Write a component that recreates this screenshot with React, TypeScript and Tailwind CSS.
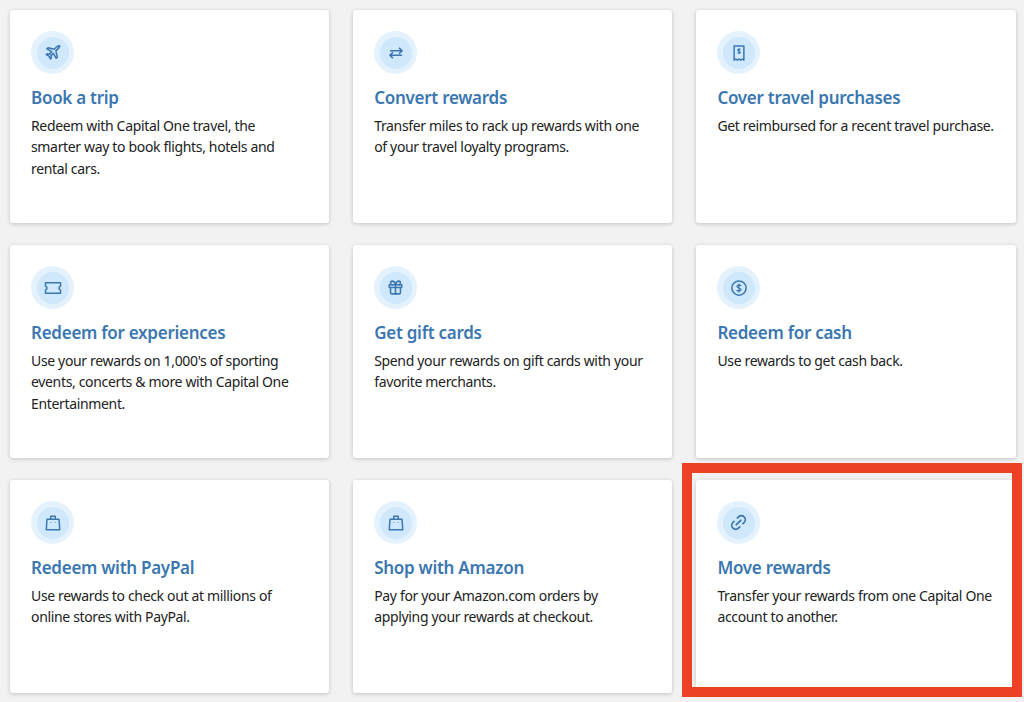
import { Gift, Link2 } from "lucide-react";
import type { ReactNode } from "react";

const iconClass = "h-[18px] w-[18px]";

const PlaneIcon = () => (
    <svg viewBox="0 0 24 24" className={iconClass} fill="none" stroke="currentColor" strokeWidth="2" strokeLinejoin="round">
        <path d="M21 3.2c-1.2-.9-3.2-.4-4.4.8l-3 3-8.3-2-1.5 1.5 6.5 3.8-3 3.2-3-.6-1.3 1.3 3.6 2 2 3.6 1.3-1.3-.6-3 3.2-3 3.8 6.5 1.5-1.5-2-8.3 3-3c1.2-1.2 1.9-3.1 1.2-4z" />
    </svg>
);

const SwapIcon = () => (
    <svg viewBox="0 0 24 24" className={iconClass} fill="none" stroke="currentColor" strokeWidth="2.2">
        <path d="M4 9h16M16 5l4 4-4 4M20 15H4M8 11l-4 4 4 4" />
    </svg>
);

const ReceiptIcon = () => (
    <svg viewBox="0 0 24 24" className={iconClass} fill="none" stroke="currentColor" strokeWidth="2" strokeLinejoin="round">
        <path d="M5.5 2.5h13v19l-2.2-1.5-2.1 1.5-2.2-1.5-2.2 1.5-2.1-1.5-2.2 1.5z" />
        <path d="M14 7.5c-.5-.8-3.6-1-3.8.7-.2 1.9 3.8 1 3.6 3-.2 1.6-3.2 1.4-3.9.4M12 5.8v7.6" strokeWidth="1.5" />
    </svg>
);

const TicketIcon = () => (
    <svg viewBox="0 0 24 24" className={iconClass} fill="none" stroke="currentColor" strokeWidth="2" strokeLinejoin="round">
        <path d="M2 5h20v4.5c-2.6 0-2.6 5 0 5V19H2v-4.5c2.6 0 2.6-5 0-5z" />
    </svg>
);

const DollarIcon = () => (
    <svg viewBox="0 0 24 24" className={iconClass} fill="none" stroke="currentColor" strokeWidth="2">
        <circle cx="12" cy="12" r="9.5" />
        <path d="M15 9c-.6-1.2-5.6-1.6-5.8.9-.2 2.8 5.8 1.4 5.6 4.3-.2 2.3-5 2-6 .5M12 6v12" strokeWidth="1.7" />
    </svg>
);

const BagIcon = () => (
    <svg viewBox="0 0 24 24" className={iconClass} fill="none" stroke="currentColor" strokeWidth="2" strokeLinejoin="round">
        <path d="M4 7h16l1 14H3z" />
        <path d="M9 7V3h6v4M9 11v.5M15 11v.5" />
    </svg>
);

const cards: { icon: ReactNode; title: string; text: string }[] = [
    { icon: <PlaneIcon />, title: "Book a trip", text: "Redeem with Capital One travel, the smarter way to book flights, hotels and rental cars." },
    { icon: <SwapIcon />, title: "Convert rewards", text: "Transfer miles to rack up rewards with one of your travel loyalty programs." },
    { icon: <ReceiptIcon />, title: "Cover travel purchases", text: "Get reimbursed for a recent travel purchase." },
    { icon: <TicketIcon />, title: "Redeem for experiences", text: "Use your rewards on 1,000's of sporting events, concerts & more with Capital One Entertainment." },
    { icon: <Gift className="h-[17px] w-[17px]" strokeWidth={2.2} />, title: "Get gift cards", text: "Spend your rewards on gift cards with your favorite merchants." },
    { icon: <DollarIcon />, title: "Redeem for cash", text: "Use rewards to get cash back." },
    { icon: <BagIcon />, title: "Redeem with PayPal", text: "Use rewards to check out at millions of online stores with PayPal." },
    { icon: <BagIcon />, title: "Shop with Amazon", text: "Pay for your Amazon.com orders by applying your rewards at checkout." },
    { icon: <Link2 className="h-[19px] w-[19px] -rotate-45" strokeWidth={2.2} />, title: "Move rewards", text: "Transfer your rewards from one Capital One account to another." },
];

function Card({ icon, title, text }: { icon: ReactNode; title: string; text: string }) {
    return (
        <div className="h-[213px] rounded-[3px] bg-white pl-[21px] pt-[21px] shadow-[0_1px_4px_rgba(0,0,0,0.2)]">
            <div className="flex h-[43px] w-[43px] items-center justify-center rounded-full bg-[#e4f2fd]">
                <div className="flex h-[32px] w-[32px] items-center justify-center rounded-full bg-[#d0e8fc] text-[#3a77b0]">
                    {icon}
                </div>
            </div>
            <h3 className="mt-[10px] text-[17px] leading-[28px] font-semibold tracking-[-0.27px] text-[#3a77b0]">{title}</h3>
            <p className="mt-[2.7px] max-w-[277px] text-[14px] leading-[21.5px] tracking-[-0.34px] text-[#222222]">{text}</p>
        </div>
    );
}

export default function App() {
    return (
        <div className="relative h-[702px] w-[1024px] overflow-hidden bg-[#f2f2f2] font-['Noto_Sans','Liberation_Sans',sans-serif]">
            <div className="grid grid-cols-[319.2px_319.2px_319.2px] gap-x-[24px] gap-y-[22px] p-[10px]">
                {cards.map((card) => (
                    <Card key={card.title} {...card} />
                ))}
            </div>
            {/* red highlight round the last card */}
            <div className="absolute left-[682px] top-[463px] h-[234px] w-[340px] border-[10px] border-[#ec4124]" />
        </div>
    );
}
